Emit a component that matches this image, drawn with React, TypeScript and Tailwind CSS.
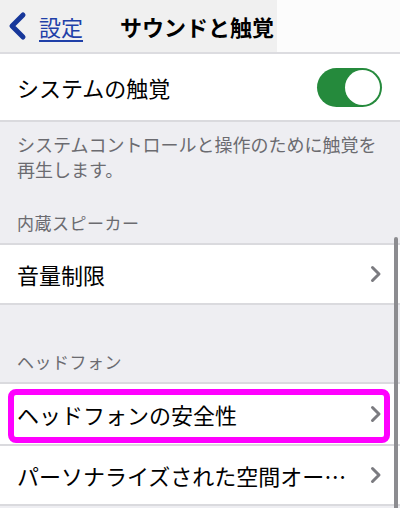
import React from 'react'

const font = { fontFamily: '"Noto Sans CJK JP", "Noto Sans", sans-serif' }

function Chevron() {
  return (
    <svg width="12" height="18" viewBox="0 0 12 18" className="shrink-0">
      <path d="M2.5 2.5 L9 9 L2.5 15.5" fill="none" stroke="#7b7b80" strokeWidth="3" strokeLinecap="round" strokeLinejoin="round" />
    </svg>
  )
}

function Row({ label }: { label: string }) {
  return (
    <div className="flex h-full items-center justify-between gap-[12px] bg-white pl-[17px] pr-[18px]">
      <span className="whitespace-nowrap text-[22px] leading-[30px] text-black">{label}</span>
      <Chevron />
    </div>
  )
}

export default function App() {
  return (
    <div className="relative h-[508px] w-[400px] overflow-hidden bg-[#eeeef2]" style={font}>
      {/* nav bar */}
      <div className="flex h-[54px] border-b-2 border-[#dcdce0]">
        <div className="flex w-[277px] items-center bg-[#f0f0f0]">
          <svg width="26" height="30" viewBox="0 0 26 30" className="ml-[4px]">
            <path d="M19 4 L8 15 L19 26" fill="none" stroke="#17379a" strokeWidth="5" strokeLinecap="round" strokeLinejoin="round" />
          </svg>
          <span className="ml-[9px] text-[22px] leading-[30px] text-[#1f40a8] underline decoration-2 underline-offset-4">設定</span>
          <span className="ml-[37px] text-[22px] font-bold leading-[30px] text-black">サウンドと触覚</span>
        </div>
        <div className="flex-1 bg-[#fcfcfc]" />
      </div>

      {/* system haptics */}
      <div className="flex h-[68px] items-center justify-between border-b-2 border-[#dadade] bg-white pl-[17px] pr-[18px]">
        <span className="text-[22px] leading-[30px] text-black">システムの触覚</span>
        <div className="flex h-[39px] w-[65px] items-center justify-end rounded-full bg-[#258a3c] pr-[2px]">
          <div className="h-[35px] w-[35px] rounded-full bg-white" />
        </div>
      </div>

      <div className="px-[17px] pt-[10px] text-[18px] leading-[25px] text-[#6b6b70]">
        システムコントロールと操作のために触覚を再生します。
      </div>

      <div className="px-[17px] pb-[8px] pt-[28px] text-[17px] leading-[25px] tracking-[0.5px] text-[#6b6b70]">内蔵スピーカー</div>

      <div className="h-[62px] border-y-2 border-[#dadade]">
        <Row label="音量制限" />
      </div>

      <div className="px-[17px] pb-[8px] pt-[44px] text-[17px] leading-[25px] tracking-[0.5px] text-[#6b6b70]">ヘッドフォン</div>

      <div className="relative h-[62px] border-t-2 border-[#dadade]">
        <Row label="ヘッドフォンの安全性" />
        <div className="absolute left-[8px] top-[5px] h-[54px] w-[382px] rounded-[8px] border-[6px] border-[#ff00ff]" />
      </div>

      <div className="h-[62px] border-y-2 border-[#dadade]">
        <Row label="パーソナライズされた空間オー…" />
      </div>

      {/* scroll indicator */}
      <div className="absolute right-[2px] top-[237px] h-[280px] w-[4px] rounded-full bg-[#8c8c90]" />
    </div>
  )
}
